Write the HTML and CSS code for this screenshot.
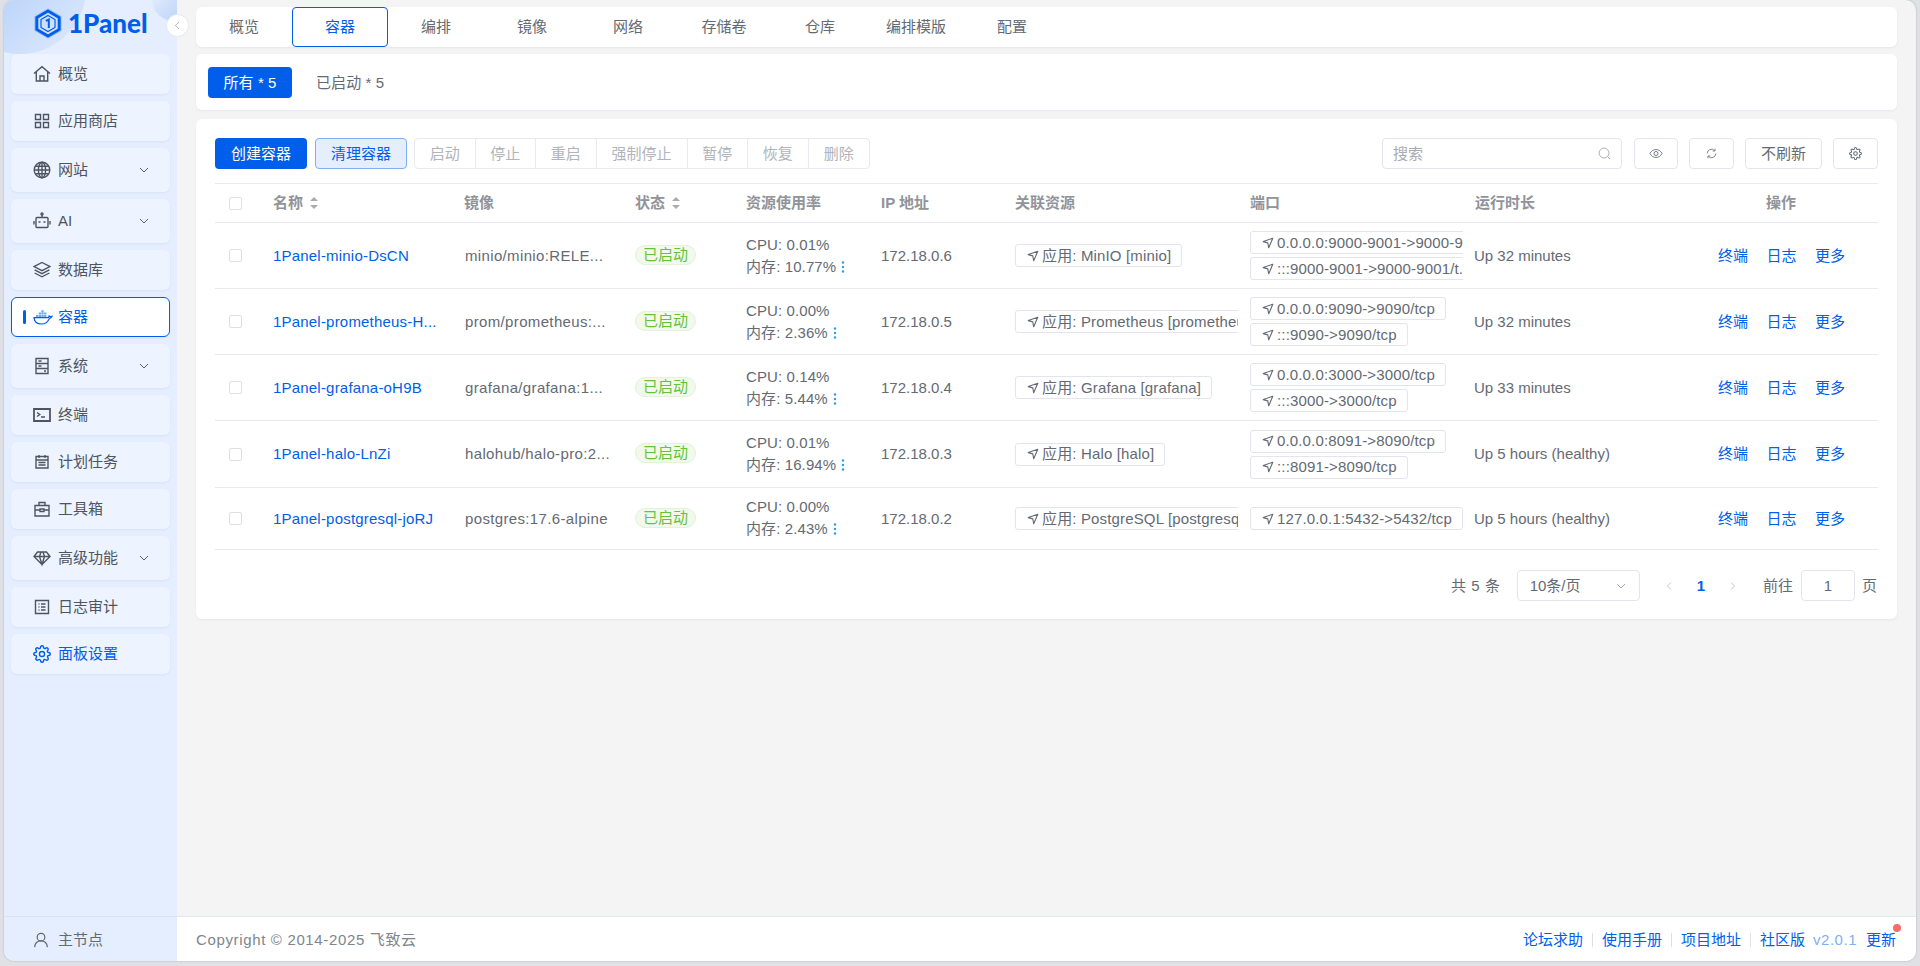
FILE: index.html
```html
<!DOCTYPE html>
<html lang="zh-CN">
<head>
<meta charset="utf-8">
<title>1Panel</title>
<link rel="stylesheet" href="styles.css">
</head>
<body>
<svg class="defs" width="0" height="0">
  <defs>
    <symbol id="arrow" viewBox="0 0 12 12"><path d="M10.800 1.200 1.200 4.600l4.600 1.300.9 4.900z" fill="none" stroke="currentColor" stroke-width="1.100" stroke-linejoin="round"/></symbol>
    <symbol id="dots" viewBox="0 0 4 14"><circle cx="2" cy="2.500" r="1.200"/><circle cx="2" cy="7" r="1.200"/><circle cx="2" cy="11.500" r="1.200"/></symbol>
    <symbol id="chev" viewBox="0 0 12 12"><path d="M2 4l4 4 4-4" fill="none" stroke="currentColor" stroke-width="1"/></symbol>
    <symbol id="gear" viewBox="0 0 24 24"><g fill="none" stroke="currentColor" stroke-width="1.900"><circle cx="12" cy="12" r="3.400"/><path d="M19.400 15a1.650 1.650 0 0 0 .33 1.820l.06.06a2 2 0 0 1 0 2.830 2 2 0 0 1-2.830 0l-.06-.06a1.650 1.650 0 0 0-1.820-.33 1.650 1.650 0 0 0-1 1.510V21a2 2 0 0 1-2 2 2 2 0 0 1-2-2v-.09A1.650 1.650 0 0 0 9 19.400a1.650 1.650 0 0 0-1.820.33l-.06.06a2 2 0 0 1-2.830 0 2 2 0 0 1 0-2.830l.06-.06a1.650 1.650 0 0 0 .33-1.820 1.650 1.650 0 0 0-1.510-1H3a2 2 0 0 1-2-2 2 2 0 0 1 2-2h.09A1.650 1.650 0 0 0 4.600 9a1.650 1.650 0 0 0-.33-1.820l-.06-.06a2 2 0 0 1 0-2.830 2 2 0 0 1 2.830 0l.06.06a1.650 1.650 0 0 0 1.820.33H9a1.650 1.650 0 0 0 1-1.510V3a2 2 0 0 1 2-2 2 2 0 0 1 2 2v.09a1.650 1.650 0 0 0 1 1.510 1.650 1.650 0 0 0 1.820-.33l.06-.06a2 2 0 0 1 2.830 0 2 2 0 0 1 0 2.830l-.06.06a1.650 1.650 0 0 0-.33 1.820V9a1.650 1.650 0 0 0 1.510 1H21a2 2 0 0 1 2 2 2 2 0 0 1-2 2h-.09a1.650 1.650 0 0 0-1.510 1z"/></g></symbol>
  </defs>
</svg>
<div class="window">
  <aside class="sidebar">
    <div class="blob blob-a"></div>
    <div class="blob blob-b"></div>
    <div class="logo">
      <svg class="logo-mark" viewBox="0 0 28 31">
        <path d="M14 .8 27.200 8.300v14.400L14 30.200.8 22.700V8.300z" fill="none" stroke="#9cc2f9" stroke-width="1"/>
        <path d="M14 3 25.200 9.500v12L14 28 2.800 21.500v-12z" fill="none" stroke="#005eeb" stroke-width="3"/>
        <path d="M14 7.500 21 11.500v8L14 23.500 7 19.500v-8z" fill="none" stroke="#005eeb" stroke-width="1.200"/>
        <path d="M11.800 12.800 14.800 11.500v8.500" fill="none" stroke="#005eeb" stroke-width="2"/>
      </svg>
      <span class="logo-text">1Panel</span>
    </div>
    <button class="collapse" type="button" aria-label="收起">
      <svg viewBox="0 0 10 12" width="7" height="11"><path d="M7 1 2 6l5 5" fill="none" stroke="#8b9098" stroke-width="1"/></svg>
    </button>
    <nav class="menu">
      <a class="item"><svg class="ico" viewBox="0 0 18 18"><path d="M1 8.500 9 1.600l8 6.900M3.300 7v9h11.400V7M7 16v-5h4v5" /></svg><span>概览</span></a>
      <a class="item"><svg class="ico" viewBox="0 0 18 18"><path d="M2.500 2.500h5v5h-5zM10.500 2.500h5v5h-5zM2.500 10.500h5v5h-5zM10.500 10.500h5v5h-5z"/></svg><span>应用商店</span></a>
      <a class="item tall"><svg class="ico" viewBox="0 0 18 18"><circle cx="9" cy="9" r="7.800"/><ellipse cx="9" cy="9" rx="3.600" ry="7.800"/><path d="M1.200 9h15.600M2.200 5.200h13.600M2.200 12.800h13.600M9 1.200v15.600"/></svg><span>网站</span><svg class="chev"><use href="#chev"/></svg></a>
      <a class="item tall"><svg class="ico" viewBox="0 0 18 18"><path d="M4 5.500h10a1 1 0 0 1 1 1v8a1 1 0 0 1-1 1H4a1 1 0 0 1-1-1v-8a1 1 0 0 1 1-1zM9 5.500V3M1 9v3.500M17 9v3.500"/><circle cx="9" cy="2" r="1"/><path d="M6.500 9.200v1.600M11.500 9.200v1.600" stroke-width="2"/></svg><span>AI</span><svg class="chev"><use href="#chev"/></svg></a>
      <a class="item"><svg class="ico" viewBox="0 0 18 18"><path d="M9 1.500 17 5.600 9 9.700 1 5.600zM1.600 8.800 9 12.600l7.400-3.800M1.600 12 9 15.800l7.400-3.800"/></svg><span>数据库</span></a>
      <a class="item active"><i class="bar"></i><svg class="ico whale" viewBox="0 0 20 16"><path class="boxes" d="M3 6h2.300v2H3zM5.700 6H8v2H5.700zM8.400 6h2.300v2H8.400zM11.100 6h2.300v2h-2.300zM5.700 3.600H8v2H5.700zM8.400 3.600h2.300v2H8.400zM11.100 3.600h2.300v2h-2.300zM8.400 1.200h2.300v2H8.400z"/><path d="M1 8.600h13.400c.8 0 1.600-.6 1.700-1.500 1 .6 2 .6 2.900.2-.5 1.400-1.500 2-2.600 2.100C15 12.500 12.500 15 8.500 15 4 15 1.400 12.500 1 8.600z"/></svg><span>容器</span></a>
      <a class="item tall"><svg class="ico" viewBox="0 0 18 18"><path d="M3 1.500h12v15H3zM3 6.500h12M3 11.500h12M5.500 4h3M5.500 9h3M11 14h2"/></svg><span>系统</span><svg class="chev"><use href="#chev"/></svg></a>
      <a class="item"><svg class="ico" viewBox="0 0 18 18"><path d="M1 3h16v12H1z" stroke-width="1.800"/><path d="M4 6.500 6.800 8.500 4 10.500M8 11h4"/></svg><span>终端</span></a>
      <a class="item"><svg class="ico" viewBox="0 0 18 18"><path d="M3 3.500h12v11.500H3zM3 7h12M6 2v3M12 2v3M5.500 9.500h7M5.500 12h7"/></svg><span>计划任务</span></a>
      <a class="item"><svg class="ico" viewBox="0 0 18 18"><path d="M2 5.500h14V16H2zM6 5.500V2.500h6v3M2 10h5M11 10h5M7 9h4v2.500H7z"/></svg><span>工具箱</span></a>
      <a class="item tall"><svg class="ico" viewBox="0 0 18 18"><path d="M4.500 3h9L17 7.500 9 15.500 1 7.500zM1 7.500h16M6.500 7.500 9 15.500l2.500-8M6.500 7.500 8 3M11.500 7.500 10 3"/></svg><span>高级功能</span><svg class="chev"><use href="#chev"/></svg></a>
      <a class="item"><svg class="ico" viewBox="0 0 18 18"><path d="M2.500 2.500h13v13h-13zM5.500 6h1M8 6h4.500M5.500 9h1M8 9h4.500M5.500 12h1M8 12h4.500"/></svg><span>日志审计</span></a>
      <a class="item accent"><svg class="ico"><use href="#gear"/></svg><span>面板设置</span></a>
    </nav>
    <div class="node">
      <svg class="ico" viewBox="0 0 18 18"><circle cx="9" cy="5.800" r="4.300"/><path d="M1.800 17c.4-4.200 3.200-7 7.200-7s6.800 2.800 7.200 7"/></svg>
      <span>主节点</span>
    </div>
  </aside>

  <div class="main">
    <div class="content">
      <div class="card tabs">
        <a class="tab">概览</a><a class="tab on">容器</a><a class="tab">编排</a><a class="tab">镜像</a><a class="tab">网络</a><a class="tab">存储卷</a><a class="tab">仓库</a><a class="tab">编排模版</a><a class="tab">配置</a>
      </div>
      <div class="card subtabs">
        <a class="sub on">所有 * 5</a><a class="sub">已启动 * 5</a>
      </div>
      <div class="card panel">
        <div class="toolbar">
          <button class="btn primary" type="button">创建容器</button>
          <button class="btn soft" type="button">清理容器</button>
          <div class="group">
            <button type="button">启动</button><button type="button">停止</button><button type="button">重启</button><button type="button" class="wide">强制停止</button><button type="button">暂停</button><button type="button">恢复</button><button type="button">删除</button>
          </div>
          <div class="tools">
            <div class="search"><span>搜索</span><svg viewBox="0 0 14 14" width="13" height="13"><circle cx="6.500" cy="6.500" r="5.300"/><path d="M10.500 10.500 13 13"/></svg></div>
            <button class="tool eye" type="button"><svg viewBox="0 0 16 12" width="14" height="11"><path d="M1 6c1.800-3 4-4.500 7-4.500S13.200 3 15 6c-1.800 3-4 4.500-7 4.500S2.800 9 1 6z"/><circle cx="8" cy="6" r="2.300"/></svg></button>
            <button class="tool" type="button"><svg viewBox="0 0 14 14" width="11" height="11"><path d="M1.500 7a5.500 5.500 0 0 1 9.600-3.600M12.500 7a5.500 5.500 0 0 1-9.600 3.600M11.500 .8v3h-3M2.500 13.200v-3h3"/></svg></button>
            <button class="tool text" type="button">不刷新</button>
            <button class="tool" type="button"><svg class="tool-gear"><use href="#gear"/></svg></button>
          </div>
        </div>

        <table class="grid">
          <colgroup>
            <col class="c-check"><col class="c-name"><col class="c-image"><col class="c-status"><col class="c-res"><col class="c-ip"><col class="c-link"><col class="c-port"><col class="c-up"><col class="c-ops">
          </colgroup>
          <thead>
            <tr>
              <th class="chk"><i class="box"></i></th>
              <th>名称<i class="sort"></i></th>
              <th>镜像</th>
              <th>状态<i class="sort"></i></th>
              <th>资源使用率</th>
              <th>IP 地址</th>
              <th>关联资源</th>
              <th>端口</th>
              <th>运行时长</th>
              <th class="ops-head">操作</th>
            </tr>
          </thead>
          <tbody>
            <tr class="r66">
              <td class="chk"><i class="box"></i></td>
              <td><a class="name">1Panel-minio-DsCN</a></td>
              <td class="image">minio/minio:RELE...</td>
              <td><span class="status">已启动</span></td>
              <td class="res"><div>CPU: 0.01%</div><div>内存: 10.77%<svg class="more"><use href="#dots"/></svg></div></td>
              <td>172.18.0.6</td>
              <td class="clip"><span class="tag"><svg><use href="#arrow"/></svg>应用: MinIO [minio]</span></td>
              <td class="clip"><span class="tag"><svg><use href="#arrow"/></svg>0.0.0.0:9000-9001-&gt;9000-9001/tcp</span><span class="tag"><svg><use href="#arrow"/></svg>:::9000-9001-&gt;9000-9001/t.</span></td>
              <td class="up">Up 32 minutes</td>
              <td><div class="acts"><a>终端</a><a>日志</a><a>更多</a></div></td>
            </tr>
            <tr class="r66">
              <td class="chk"><i class="box"></i></td>
              <td><a class="name">1Panel-prometheus-H...</a></td>
              <td class="image">prom/prometheus:...</td>
              <td><span class="status">已启动</span></td>
              <td class="res"><div>CPU: 0.00%</div><div>内存: 2.36%<svg class="more"><use href="#dots"/></svg></div></td>
              <td>172.18.0.5</td>
              <td class="clip"><span class="tag"><svg><use href="#arrow"/></svg>应用: Prometheus [prometheus]</span></td>
              <td class="clip"><span class="tag"><svg><use href="#arrow"/></svg>0.0.0.0:9090-&gt;9090/tcp</span><span class="tag"><svg><use href="#arrow"/></svg>:::9090-&gt;9090/tcp</span></td>
              <td class="up">Up 32 minutes</td>
              <td><div class="acts"><a>终端</a><a>日志</a><a>更多</a></div></td>
            </tr>
            <tr class="r66">
              <td class="chk"><i class="box"></i></td>
              <td><a class="name">1Panel-grafana-oH9B</a></td>
              <td class="image">grafana/grafana:1...</td>
              <td><span class="status">已启动</span></td>
              <td class="res"><div>CPU: 0.14%</div><div>内存: 5.44%<svg class="more"><use href="#dots"/></svg></div></td>
              <td>172.18.0.4</td>
              <td class="clip"><span class="tag"><svg><use href="#arrow"/></svg>应用: Grafana [grafana]</span></td>
              <td class="clip"><span class="tag"><svg><use href="#arrow"/></svg>0.0.0.0:3000-&gt;3000/tcp</span><span class="tag"><svg><use href="#arrow"/></svg>:::3000-&gt;3000/tcp</span></td>
              <td class="up">Up 33 minutes</td>
              <td><div class="acts"><a>终端</a><a>日志</a><a>更多</a></div></td>
            </tr>
            <tr class="r67">
              <td class="chk"><i class="box"></i></td>
              <td><a class="name">1Panel-halo-LnZi</a></td>
              <td class="image">halohub/halo-pro:2...</td>
              <td><span class="status">已启动</span></td>
              <td class="res"><div>CPU: 0.01%</div><div>内存: 16.94%<svg class="more"><use href="#dots"/></svg></div></td>
              <td>172.18.0.3</td>
              <td class="clip"><span class="tag"><svg><use href="#arrow"/></svg>应用: Halo [halo]</span></td>
              <td class="clip"><span class="tag"><svg><use href="#arrow"/></svg>0.0.0.0:8091-&gt;8090/tcp</span><span class="tag"><svg><use href="#arrow"/></svg>:::8091-&gt;8090/tcp</span></td>
              <td class="up">Up 5 hours (healthy)</td>
              <td><div class="acts"><a>终端</a><a>日志</a><a>更多</a></div></td>
            </tr>
            <tr class="r62">
              <td class="chk"><i class="box"></i></td>
              <td><a class="name">1Panel-postgresql-joRJ</a></td>
              <td class="image">postgres:17.6-alpine</td>
              <td><span class="status">已启动</span></td>
              <td class="res"><div>CPU: 0.00%</div><div>内存: 2.43%<svg class="more"><use href="#dots"/></svg></div></td>
              <td>172.18.0.2</td>
              <td class="clip"><span class="tag"><svg><use href="#arrow"/></svg>应用: PostgreSQL [postgresql]</span></td>
              <td class="clip"><span class="tag"><svg><use href="#arrow"/></svg>127.0.0.1:5432-&gt;5432/tcp</span></td>
              <td class="up">Up 5 hours (healthy)</td>
              <td><div class="acts"><a>终端</a><a>日志</a><a>更多</a></div></td>
            </tr>
          </tbody>
        </table>

        <div class="pager">
          <span class="total">共 5 条</span>
          <div class="select"><span>10条/页</span><svg class="select-chev"><use href="#chev"/></svg></div>
          <svg class="page-arrow" viewBox="0 0 10 12" width="7" height="10"><path d="M7 1 2 6l5 5"/></svg>
          <b class="page">1</b>
          <svg class="page-arrow" viewBox="0 0 10 12" width="7" height="10"><path d="M3 1l5 5-5 5"/></svg>
          <span class="goto">前往</span>
          <div class="jump">1</div>
          <span>页</span>
        </div>
      </div>
    </div>

    <footer class="foot">
      <span class="copy">Copyright © 2014-2025 飞致云</span>
      <div class="links">
        <a>论坛求助</a><i></i><a>使用手册</a><i></i><a>项目地址</a><i></i><a>社区版</a><a class="ver">v2.0.1</a><a class="upd">更新</a>
      </div>
    </footer>
  </div>
</div>
</body>
</html>
```

FILE: styles.css
```css
* { box-sizing: border-box; }
html, body { margin: 0; height: 100%; }
body {
  background: #dfe1e5;
  font-family: "Liberation Sans", "Noto Sans CJK SC", sans-serif;
  font-size: 15px;
  line-height: 22px;
  color: #646a73;
  padding: 0 4px 5px;
  overflow: hidden;
}
.defs { position: absolute; }
a { text-decoration: none; }
button { font: inherit; color: inherit; background: none; cursor: pointer; }

.window {
  display: flex;
  height: 961px;
  border-radius: 10px;
  overflow: hidden;
  background: #f4f4f4;
  box-shadow: 0 0 2px rgba(0,0,0,.25);
}

/* sidebar */
.sidebar {
  position: relative;
  width: 173px;
  flex: none;
  display: flex;
  flex-direction: column;
  background: #e4eefe;
}
.blob { position: absolute; }
.blob-a {
  left: -50px; top: -78px; width: 132px; height: 132px;
  border-radius: 50%;
  background: linear-gradient(135deg, #a9c9f8 20%, #dde9fd 95%);
}
.blob-b {
  right: 0; top: 0; width: 25px; height: 22px;
  border-bottom-left-radius: 25px 22px;
  background: linear-gradient(135deg, #e0ebfd, #bcd3f9);
}
.logo {
  position: relative;
  height: 54px;
  flex: none;
  display: flex;
  align-items: flex-start;
  padding: 8px 0 0 30px;
  gap: 6px;
}
.logo-mark { width: 28px; height: 31px; }
.logo-text {
  font-family: "Lato", sans-serif;
  font-weight: 900;
  font-size: 26px;
  line-height: 31px;
  color: #005eeb;
}
.collapse {
  position: absolute;
  left: 162px; top: 14px;
  z-index: 3;
  width: 23px; height: 23px;
  border-radius: 50%;
  background: #fff;
  border: 1px solid #e6e8ee;
  padding: 0;
  display: flex;
  align-items: center;
  justify-content: center;
}
.menu {
  position: relative;
  flex: 1;
  padding: 0 7px;
  display: flex;
  flex-direction: column;
  gap: 7px;
}
.item {
  position: relative;
  height: 40px;
  flex: none;
  display: flex;
  align-items: center;
  padding-left: 22px;
  gap: 7px;
  background: #edf3ff;
  border-radius: 6px;
  box-shadow: 0 1px 2px rgba(120,150,210,.12);
  color: #4f5560;
}
.item.tall { height: 44px; }
.item.active {
  background: #fff;
  border: 1px solid #005eeb;
  padding-left: 21px;
  color: #005eeb;
}
.item.accent { color: #005eeb; }
.bar {
  position: absolute;
  left: 11px; top: 12px;
  width: 3px; height: 14px;
  border-radius: 2px;
  background: #005eeb;
}
.ico {
  width: 18px; height: 18px;
  flex: none;
  fill: none;
  stroke: currentColor;
  stroke-width: 1.400;
}
.whale { width: 20px; height: 16px; margin-right: -2px; stroke-width: 1.200; }
.whale .boxes { fill: #6ea6f5; stroke: none; }
.chev {
  position: absolute;
  right: 20px; top: 50%;
  width: 12px; height: 12px;
  margin-top: -6px;
  color: #5a6069;
}
.node {
  height: 45px;
  flex: none;
  display: flex;
  align-items: center;
  gap: 9px;
  padding: 1px 0 0 29px;
  border-top: 1px solid #dde3ee;
  color: #646a73;
}
.node .ico { width: 16px; height: 18px; }

/* main */
.main {
  flex: 1;
  min-width: 0;
  display: flex;
  flex-direction: column;
}
.content {
  flex: 1;
  padding: 7px 19px 0 19px;
  display: flex;
  flex-direction: column;
}
.card {
  background: #fff;
  border-radius: 6px;
  box-shadow: 0 1px 2px rgba(150,160,190,.15);
}
.tabs {
  height: 40px;
  display: flex;
}
.tab {
  width: 96px;
  display: flex;
  align-items: center;
  justify-content: center;
  border-radius: 4px;
  border: 1px solid transparent;
}
.tab.on { border-color: #005eeb; color: #005eeb; }
.subtabs {
  height: 56px;
  margin-top: 7px;
  display: flex;
  align-items: center;
  padding: 0 0 0 12px;
  gap: 24px;
}
.sub { padding-top: 1px; letter-spacing: .1px; }
.sub.on {
  width: 84px; height: 31px;
  background: #005eeb;
  color: #fff;
  border-radius: 4px;
  display: flex;
  align-items: center;
  justify-content: center;
}
.panel {
  height: 500px;
  margin-top: 9px;
  padding: 19px 19px 0 19px;
  display: flex;
  flex-direction: column;
}

/* toolbar */
.toolbar {
  display: flex;
  align-items: center;
  height: 31px;
  flex: none;
  margin-bottom: 14px;
}
.btn {
  width: 92px; height: 31px;
  border-radius: 4px;
  border: 1px solid transparent;
  padding: 0;
  margin-right: 8px;
}
.btn.primary { background: #005eeb; color: #fff; }
.btn.soft { background: #e5eefd; color: #005eeb; border-color: #7fb0f7; margin-right: 7px; }
.group {
  display: flex;
  height: 31px;
  border: 1px solid #e8eaf0;
  border-radius: 4px;
}
.group button {
  width: 60.500px;
  border: 0;
  border-right: 1px solid #e8eaf0;
  padding: 0;
  color: #b1b4ba;
}
.group button.wide { width: 91px; }
.group button:last-child { border-right: 0; }
.tools {
  margin-left: auto;
  display: flex;
  gap: 11px;
}
.search {
  width: 240px; height: 31px;
  border: 1px solid #e3e5ec;
  border-radius: 4px;
  display: flex;
  align-items: center;
  justify-content: space-between;
  padding: 0 10px;
  color: #a8abb2;
  margin-right: 1px;
}
.search svg { fill: none; stroke: #a8abb2; }
.tool {
  width: 45px; height: 31px;
  border: 1px solid #e3e5ec;
  border-radius: 4px;
  padding: 0;
  display: flex;
  align-items: center;
  justify-content: center;
}
.tool svg { fill: none; stroke: #646a73; }
.tool.eye { width: 44px; }
.tool.text { width: 77px; }
.tool-gear { width: 13px; height: 13px; color: #646a73; }

/* table */
.grid {
  width: 1663px;
  table-layout: fixed;
  border-collapse: collapse;
  flex: none;
}
.c-check { width: 46px; }
.c-name { width: 191px; }
.c-image { width: 171px; }
.c-status { width: 111px; }
.c-res { width: 135px; }
.c-ip { width: 134px; }
.c-link { width: 235px; }
.c-port { width: 225px; }
.c-up { width: 243px; }
.c-ops { width: 172px; }
th, td {
  padding: 0 0 0 12px;
  text-align: left;
  border-bottom: 1px solid #e8eaf0;
  white-space: nowrap;
}
thead tr { height: 39px; border-top: 1px solid #e8eaf0; }
th { color: #909399; font-weight: 700; }
th.ops-head { padding-left: 60px; }
.r66 { height: 66px; }
.r67 { height: 67px; }
.r62 { height: 62px; }
.chk { padding: 0 0 0 14px; line-height: 0; }
.box {
  display: inline-block;
  width: 13px; height: 13px;
  border: 1px solid #dcdfe6;
  border-radius: 2px;
  background: #fff;
}
.sort {
  display: inline-block;
  position: relative;
  width: 8px; height: 12px;
  margin-left: 7px;
  vertical-align: -1px;
}
.sort::before, .sort::after {
  content: "";
  position: absolute;
  left: 0;
  border-left: 4px solid transparent;
  border-right: 4px solid transparent;
}
.sort::before { top: 0; border-bottom: 4px solid #a8abb2; }
.sort::after { bottom: 0; border-top: 4px solid #a8abb2; }
.name { color: #005eeb; letter-spacing: .2px; }
.image { padding-left: 13px; letter-spacing: .35px; }
.status {
  display: flex;
  align-items: center;
  justify-content: center;
  width: 61px; height: 20px;
  margin-bottom: 2px;
  background: #f0f9eb;
  border: 1px solid #e1f3d8;
  border-radius: 10px;
  color: #67c23a;
}
.res { line-height: 22px; letter-spacing: .1px; }
.r62 .res { padding-bottom: 2px; }
.more { width: 4px; height: 14px; margin-left: 5px; fill: #2a9fe8; vertical-align: -2px; }
.up { padding-left: 11px; }
.clip { overflow: hidden; padding-top: 1px; padding-bottom: 1px; }
.tag {
  display: flex;
  align-items: center;
  width: max-content;
  height: 23px;
  border: 1px solid #e3e5ec;
  border-radius: 3px;
  background: #fff;
  padding: 0 10px 0 11px;
  letter-spacing: .15px;
}
.tag + .tag { margin-top: 3px; }
.tag svg { width: 12px; height: 12px; margin-right: 3px; flex: none; color: #646a73; }
.acts { display: flex; gap: 18.500px; }
.acts a { color: #005eeb; }

/* pager */
.pager {
  display: flex;
  align-items: center;
  height: 31px;
  margin-top: 20px;
  justify-content: flex-end;
  padding-right: 1px;
}
.total { letter-spacing: .6px; margin-right: 16px; }
.select {
  width: 123px; height: 31px;
  border: 1px solid #e3e5ec;
  border-radius: 4px;
  display: flex;
  align-items: center;
  justify-content: space-between;
  padding: 0 12px;
  margin-right: 26px;
}
.select-chev { width: 12px; height: 12px; color: #a8abb2; }
.page-arrow { fill: none; stroke: #a8abb2; }
.page { color: #005eeb; margin: 0 24px; }
.goto { margin-left: 27px; }
.jump {
  width: 54px; height: 31px;
  margin: 0 7px 0 8px;
  border: 1px solid #e3e5ec;
  border-radius: 4px;
  display: flex;
  align-items: center;
  justify-content: center;
}

/* footer */
.foot {
  height: 45px;
  flex: none;
  background: #fff;
  border-top: 1px solid #e3e7f1;
  display: flex;
  align-items: center;
  justify-content: space-between;
  padding: 1px 20px 0 19px;
}
.copy { letter-spacing: .65px; color: #80858d; }
.links { display: flex; align-items: center; }
.links a { color: #005eeb; }
.links i { width: 1px; height: 14px; background: #dcdfe6; margin: 0 9px; }
.links .ver { color: #7fb0f5; margin: 0 9px 0 8px; letter-spacing: .5px; }
.links .upd { position: relative; }
.upd::after {
  content: "";
  position: absolute;
  right: -5px; top: -5px;
  width: 8px; height: 8px;
  border-radius: 50%;
  background: #f56c6c;
}
```
